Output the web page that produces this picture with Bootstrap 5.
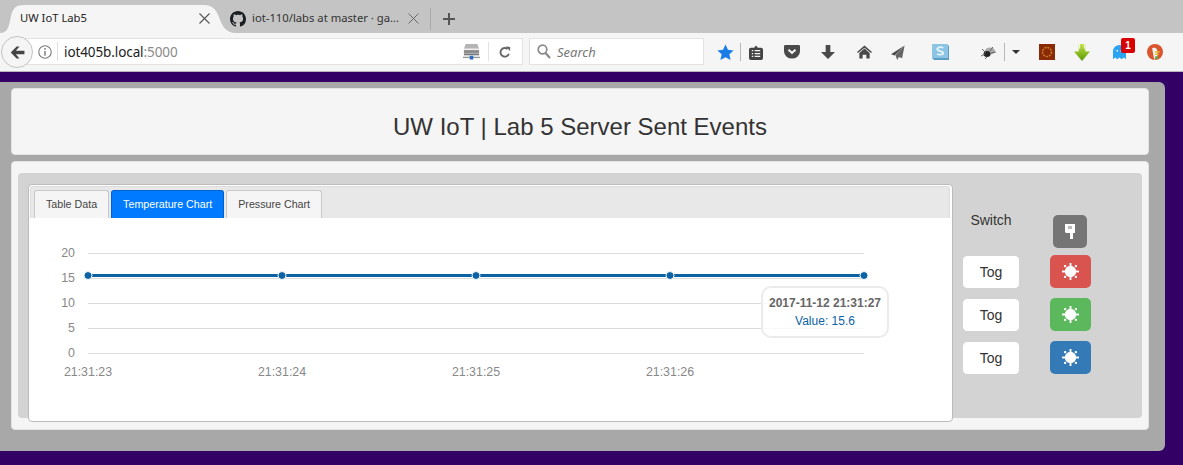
<!DOCTYPE html>
<html lang="en">
<head>
<meta charset="utf-8">
<title>UW IoT Lab5</title>
<link rel="stylesheet" href="https://cdn.jsdelivr.net/npm/bootstrap@5.3.0/dist/css/bootstrap.min.css">
<style>
html,body{margin:0;height:465px;overflow:hidden}
body{background:#330066;font-family:"Liberation Sans",Arial,sans-serif;color:#333;width:1183px}
.strip{height:33px;background:#c4c4c4;font-family:"Noto Sans",sans-serif;font-size:11.25px;color:#222;position:relative}
.shape{position:absolute;left:0;top:0}
.tab1{position:relative;width:222px;height:33px;padding-left:20px}
.tab2{width:208px;height:33px;padding-left:8px;color:#333}
.tabsep{width:1px;height:22px;background:#a9a9a9;margin-top:8px}
.plus{margin-left:12px;align-self:center;margin-top:5px}
.tool{height:39px;background:#f5f5f5;border-bottom:1px solid #b9b4bd;position:relative;font-family:"Noto Sans",sans-serif}
.back{position:absolute;left:1px;top:3px;width:32px;height:32px;border-radius:50%;background:#f5f5f5;border:1px solid #c4c4c4;z-index:2}
.urlbar{margin-left:24px;width:499px;height:27px;background:#fff;border:1px solid #e2e2e2;margin-top:5px}
.urlinfo{width:33px;padding-left:13px;border-right:1px solid #ddd;height:19px}
.urltext{font-size:13.5px;color:#222;padding:2px 0 0 6px;letter-spacing:-.1px}
.urltext span{color:#8a8a8a}
.urlend{margin-left:auto}
.urlsep{width:1px;height:19px;background:#e2e2e2;margin:0 10px 0 8px}
.searchbox{margin-left:6px;width:175px;height:27px;background:#fff;border:1px solid #e2e2e2;margin-top:5px;padding-left:7px;font-size:13px;font-style:italic;color:#777}
.searchbox span{padding-top:2px;margin-left:6px}
.icons{margin-left:6px;display:grid;grid-template-columns:30px 1px 30px 42px 30px 42px 26px 58px 35px 1px 22px 40px 30px 42px 32px;height:38px;place-items:center}
.vsep{width:1px;height:18px;background:#b9b9b9}
.spid{padding-left:5px}
.ghost{position:relative;width:22px;height:22px}
.ghostmark{margin:4px 0 0 6px;display:block}
.cnt{position:absolute;left:14px;top:-3px;width:14px;height:15px;border-radius:2px;background:#d80000;color:#fff;font:bold 10px/15px "Liberation Sans",sans-serif;text-align:center}
.spacer{height:10px}
.panel{width:1165px;height:369px;background:#a8a8a8;border-top-right-radius:6px;border-bottom-right-radius:6px;padding:6px 16px 0 11px}
.wellbox{background:#f5f5f5;border:1px solid #e3e3e3;border-radius:4px}
.headbox{height:67px;margin-bottom:6px}
.headbox h1{font-size:24px;font-weight:400;color:#333;margin:0;line-height:1;padding-top:11px}
.mainbox{height:269px;padding:11px 6px 0}
.graybox{height:245px;background:#d3d3d3;border-radius:4px;padding:11px 0 0 10px}
.chartcard{width:925px;height:238px;background:#fff;border:1px solid #bbb;border-radius:4px;padding:1px 2px 1px 1px;position:relative}
.tabbar{height:32px;background:#e8e8e8;border:1px solid #dcdcdc;border-bottom:0;border-radius:3px 3px 0 0;padding:3px 0 0 3px;gap:2px}
.tabbar .nav-link{font-size:10.7px;line-height:26px;height:28px;padding:0 11px;color:#444;background:#f5f5f5;border:1px solid #c8c8c8;border-bottom:0;border-radius:3px 3px 0 0;margin:0}
.tabbar .nav-link.active{background:#007bff;color:#fff;border-color:#0062cc}
.chartsvg{display:block}
.chartsvg text{font-family:"Liberation Sans",sans-serif;font-size:12.4px;fill:#888}
.hover{position:absolute;left:732px;top:101px;width:128px;height:52px;background:rgba(255,255,255,.8);border:2px solid rgba(230,230,230,.8);border-radius:10px;font-size:12px;text-align:center;padding-top:6px;line-height:18px}
.hover b{display:block;color:#666}
.hover span{color:#0b62a4}
.sidecol{width:180px;padding:26px 0 0 10px}
.rowa{height:38px;margin-bottom:7px}
.rowb{height:33px;margin-bottom:10px}
.swlabel{width:56px;font-size:14px;line-height:20px;text-align:center;color:#333}
.togbtn{width:56px;height:32px;padding:0;font-size:14px;line-height:30px;background:#fff;border:1px solid #fff;border-radius:4px;color:#333}
.ledbtn{width:41px;height:33px;padding:0;border-radius:5px;border:0;margin-left:31px}
.swbtn{width:34px;height:33px;padding:0;border-radius:5px;border:0;background:#757575;margin:5px 0 0 34px}
.ledred{background:#d9534f}.ledgreen{background:#5cb85c}.ledblue{background:#337ab7}
</style>
</head>
<body>
<div class="strip d-flex">
  <svg class="shape" width="240" height="33"><path d="M0 33C8 33 9 26 11 16C13 8 16 5 24 5H204C212 5 216 9 219 17C222 26 226 33 236 33Z" fill="#f5f5f5"/></svg>
  <div class="tab1 d-flex align-items-center pt-1"><span>UW IoT Lab5</span>
    <svg class="ms-auto" style="margin-right:12px" width="11" height="11" viewBox="0 0 11 11"><path d="M.5.5l10 10M10.5.5l-10 10" stroke="#555" stroke-width="1.1"/></svg></div>
  <div class="tab2 d-flex align-items-center pt-1">
    <svg width="16" height="16" viewBox="0 0 16 16"><path fill="#1b1f23" d="M8 0C3.58 0 0 3.58 0 8c0 3.54 2.29 6.53 5.47 7.59.4.07.55-.17.55-.38 0-.19-.01-.82-.01-1.49-2.01.37-2.53-.49-2.69-.94-.09-.23-.48-.94-.82-1.13-.28-.15-.68-.52-.01-.53.63-.01 1.08.58 1.23.82.72 1.21 1.87.87 2.33.66.07-.52.28-.87.51-1.07-1.78-.2-3.64-.89-3.64-3.95 0-.87.31-1.59.82-2.15-.08-.2-.36-1.02.08-2.12 0 0 .67-.21 2.2.82.64-.18 1.32-.27 2-.27.68 0 1.36.09 2 .27 1.53-1.04 2.2-.82 2.2-.82.44 1.1.16 1.92.08 2.12.51.56.82 1.27.82 2.15 0 3.07-1.87 3.75-3.65 3.95.29.25.54.73.54 1.48 0 1.07-.01 1.93-.01 2.2 0 .21.15.46.55.38A8.013 8.013 0 0016 8c0-4.42-3.58-8-8-8z"/></svg>
    <span class="text-nowrap" style="margin-left:6px">iot-110/labs at master · ga...</span>
    <svg class="ms-auto" style="margin-right:11px" width="11" height="11" viewBox="0 0 11 11"><path d="M.5.5l10 10M10.5.5l-10 10" stroke="#666" stroke-width="1"/></svg>
  </div>
  <div class="tabsep"></div>
  <svg class="plus" width="12" height="12" viewBox="0 0 12 12"><path d="M6 0v12M0 6h12" stroke="#555" stroke-width="2"/></svg>
</div>
<div class="tool d-flex">
  <div class="back d-flex align-items-center justify-content-center">
    <svg width="15" height="13" viewBox="0 0 17 15"><path d="M7.500.5L.7 7.500l6.800 7h3.300L6.600 9.400H16.500V5.600H6.600L10.800.5z" fill="#444"/></svg>
  </div>
  <div class="urlbar d-flex align-items-center">
    <div class="urlinfo d-flex align-items-center">
      <svg width="14" height="14" viewBox="0 0 13 13"><circle cx="6.500" cy="6.500" r="5.800" fill="none" stroke="#777"/><path d="M6.500 5.500v4.500M6.500 2.800v1.500" stroke="#777" stroke-width="1.300"/></svg>
    </div>
    <div class="urltext">iot405b.local<span>:5000</span></div>
    <div class="urlend d-flex align-items-center">
      <svg width="17" height="16" viewBox="0 0 19 17" preserveAspectRatio="none"><path d="M3 0h13l2 5H1z" fill="#b4b4b4"/><rect x="1" y="5" width="17" height="1.500" fill="#eee"/><rect x="1" y="6.500" width="17" height="3" fill="#8a8a8a"/><rect x="1" y="10" width="17" height="2" fill="#777"/><rect y="13.500" width="19" height="1.500" fill="#999"/><rect x="7.500" y="12.500" width="4" height="4" fill="#2d6cc0"/></svg>
      <div class="urlsep"></div>
      <svg style="margin-right:11px" width="12" height="12" viewBox="0 0 13 14"><path d="M11 9a5 5 0 1 1-1.500-5.500" fill="none" stroke="#666" stroke-width="2.200"/><path d="M7.500 .5l5 .5v5z" fill="#666"/></svg>
    </div>
  </div>
  <div class="searchbox d-flex align-items-center">
    <svg width="14" height="15" viewBox="0 0 14 15"><circle cx="5.500" cy="5.500" r="4.300" fill="none" stroke="#8a8a8a" stroke-width="1.700"/><path d="M8.500 9l4.500 5" stroke="#8a8a8a" stroke-width="2.200"/></svg>
    <span>Search</span>
  </div>
  <div class="icons">
    <svg width="17" height="17" viewBox="0 0 18 18"><path d="M9 .5l2.600 5.600 6 .7-4.500 4.100 1.300 6.100L9 14l-5.400 3 1.300-6.100L.4 6.800l6-.7z" fill="#1a7de6"/></svg>
    <div class="vsep"></div>
    <svg width="14" height="15" viewBox="0 0 15 17" preserveAspectRatio="none"><path d="M2 3h3.500L7.500.5 9.500 3H13a2 2 0 0 1 2 2v10a2 2 0 0 1-2 2H2a2 2 0 0 1-2-2V5a2 2 0 0 1 2-2z" fill="#444"/><path d="M3 6.500h1.500M6 6.500h6M3 9.800h1.500M6 9.800h6M3 13h1.500M6 13h6" stroke="#f5f5f5" stroke-width="1.400"/></svg>
    <svg width="16" height="14" viewBox="0 0 17 16" preserveAspectRatio="none"><path d="M1.500 0h14A1.500 1.500 0 0 1 17 1.500V7a8.500 8.500 0 0 1-17 0V1.500A1.500 1.500 0 0 1 1.500 0z" fill="#4a4a4a"/><path d="M4.800 5.500L8.500 9l3.700-3.500" fill="none" stroke="#f5f5f5" stroke-width="2.300"/></svg>
    <svg width="14" height="14" viewBox="0 0 15 16" preserveAspectRatio="none"><path d="M5 0h5v8h5l-7.500 8L0 8h5z" fill="#4a4a4a"/></svg>
    <svg width="15" height="14" viewBox="0 0 16 16" preserveAspectRatio="none"><path d="M8 .5L16 8l-1 1L8 3 1 9 0 8z" fill="#4a4a4a"/><path d="M8 4l5.500 5v6.500H10V11H6v4.500H2.500V9z" fill="#4a4a4a"/></svg>
    <svg width="14" height="15" viewBox="0 0 17 17" preserveAspectRatio="none"><path d="M16.500.5L0 10.500l4.500 1.500z" fill="#4a4a4a"/><path d="M16.500.5L5.500 11.500l2 5.500 2-3.500 4 1.500z" fill="#666"/></svg>
    <svg width="17" height="16" viewBox="0 0 16 17" preserveAspectRatio="none"><rect x="0" y="0" width="15" height="15" rx="1" fill="#8cc4e4"/><path d="M15 1l1 1v15H2l-2-2h15z" fill="#5c9dc4"/><path d="M10.500 4.200C9 3 5 3.100 5 5.500 5 8 10.500 7 10.500 9.500c0 2.200-4 2.200-5.700 1" fill="none" stroke="#e4f2fa" stroke-width="1.900"/></svg>
    <div class="spid d-flex align-items-center justify-content-center">
      <svg width="16" height="14" viewBox="0 0 16 14"><ellipse cx="9" cy="6" rx="5" ry="3.500" fill="#aaa"/><ellipse cx="6" cy="9" rx="3.500" ry="3" fill="#222"/><path d="M1 4l4 4M0 11l4-2M6 12l-2 2M12 2l-3 4M15 7l-5 1" stroke="#666"/></svg>
    </div>
    <div class="vsep"></div>
    <svg width="8" height="4" viewBox="0 0 10 5"><path d="M0 0h10L5 5z" fill="#333"/></svg>
    <svg width="16" height="16" viewBox="0 0 16 16"><rect width="16" height="16" fill="#8a2a06"/><circle cx="8" cy="8" r="4.500" fill="none" stroke="#c9832a" stroke-width="1.400" stroke-dasharray="2 1"/></svg>
    <svg width="16" height="17" viewBox="0 0 17 18" preserveAspectRatio="none"><defs><linearGradient id="gr" x1="0" y1="0" x2="0" y2="1"><stop offset="0" stop-color="#c0e040"/><stop offset="1" stop-color="#5a9a08"/></linearGradient></defs><path d="M5 0h7v8h5l-8.500 10L0 8h5z" fill="url(#gr)"/><path d="M6 0v5M11 0v5" stroke="#fff"/></svg>
    <div class="ghost">
      <svg class="ghostmark" width="13" height="15" viewBox="0 0 14 18" preserveAspectRatio="none"><path d="M0 17V7a7 7 0 0 1 14 0v10l-2.300-2-2.400 2L7 15l-2.300 2-2.400-2z" fill="#2aa4f0"/><circle cx="4.500" cy="7" r="1" fill="#fff"/><circle cx="9" cy="7" r="1" fill="#fff"/></svg>
      <div class="cnt">1</div>
    </div>
    <svg width="16" height="16" viewBox="0 0 17 17"><circle cx="8.500" cy="8.500" r="8.500" fill="#d9552e"/><path d="M5.500 4.500c3-1.500 5.500.5 5.500 3v8l-3 1.200C7 14 6 8 5.500 4.500z" fill="#f2f2f2"/><path d="M8.500 8.500h5M8.500 11h4" stroke="#e9b822" stroke-width="1.500"/><path d="M8.500 13.500l3-1v3l-3 1z" fill="#5aa83a"/></svg>
  </div>
</div>
<div class="spacer"></div>
<div class="panel">
  <div class="wellbox headbox d-flex align-items-center justify-content-center"><h1>UW IoT | Lab 5 Server Sent Events</h1></div>
  <div class="wellbox mainbox">
    <div class="graybox d-flex">
      <div class="chartcard">
        <ul class="nav tabbar">
          <li class="nav-item"><a class="nav-link" href="#">Table Data</a></li>
          <li class="nav-item"><a class="nav-link active" href="#">Temperature Chart</a></li>
          <li class="nav-item"><a class="nav-link" href="#">Pressure Chart</a></li>
        </ul>
        <svg class="chartsvg" width="920" height="202" viewBox="1 0 920 202">
          <g stroke="#ddd" stroke-width="1"><path d="M59 35.500H835M59 60.500H835M59 85.500H835M59 110.500H835M59 135.500H835"/></g>
          <g text-anchor="end"><text x="46" y="39">20</text><text x="46" y="64">15</text><text x="46" y="89">10</text><text x="46" y="114">5</text><text x="46" y="139">0</text></g>
          <g text-anchor="middle"><text x="59" y="158">21:31:23</text><text x="253" y="158">21:31:24</text><text x="447" y="158">21:31:25</text><text x="641" y="158">21:31:26</text></g>
          <path d="M59 57.500H835" stroke="#0b62a4" stroke-width="3"/>
          <g fill="#0b62a4" stroke="#fff" stroke-width="1"><circle cx="59" cy="57.500" r="4"/><circle cx="253" cy="57.500" r="4"/><circle cx="447" cy="57.500" r="4"/><circle cx="641" cy="57.500" r="4"/><circle cx="835" cy="57.500" r="4"/></g>
        </svg>
        <div class="hover"><b>2017-11-12 21:31:27</b><span>Value: 15.6</span></div>
      </div>
      <div class="sidecol">
        <div class="rowa d-flex align-items-start">
          <div class="swlabel">Switch</div>
          <button class="btn swbtn d-flex align-items-center justify-content-center" type="button" aria-label="switch">
            <svg width="10" height="15" viewBox="0 0 10 15"><path d="M0 0h10v9H8v6H5V9H1L0 8z" fill="#fff"/><rect x="3" y="2" width="4" height="3" fill="#bbb"/></svg>
          </button>
        </div>
        <div class="rowb d-flex align-items-end">
          <button class="btn togbtn" type="button">Tog</button>
          <button class="btn ledbtn ledred d-flex align-items-center justify-content-center" type="button" aria-label="red led"><svg width="17" height="17" viewBox="0 0 18 18"><circle cx="9" cy="9" r="6" fill="#fff"/><g fill="#fff"><rect x="8" width="2" height="4"/><rect x="8" y="14" width="2" height="4"/><rect y="8" width="4" height="2"/><rect x="14" y="8" width="4" height="2"/><rect x="2.200" y="2.200" width="2.200" height="2.200"/><rect x="13.600" y="2.200" width="2.200" height="2.200"/><rect x="2.200" y="13.600" width="2.200" height="2.200"/><rect x="13.600" y="13.600" width="2.200" height="2.200"/></g></svg></button>
        </div>
        <div class="rowb d-flex align-items-end">
          <button class="btn togbtn" type="button">Tog</button>
          <button class="btn ledbtn ledgreen d-flex align-items-center justify-content-center" type="button" aria-label="green led"><svg width="17" height="17" viewBox="0 0 18 18"><circle cx="9" cy="9" r="6" fill="#fff"/><g fill="#fff"><rect x="8" width="2" height="4"/><rect x="8" y="14" width="2" height="4"/><rect y="8" width="4" height="2"/><rect x="14" y="8" width="4" height="2"/><rect x="2.200" y="2.200" width="2.200" height="2.200"/><rect x="13.600" y="2.200" width="2.200" height="2.200"/><rect x="2.200" y="13.600" width="2.200" height="2.200"/><rect x="13.600" y="13.600" width="2.200" height="2.200"/></g></svg></button>
        </div>
        <div class="rowb d-flex align-items-end">
          <button class="btn togbtn" type="button">Tog</button>
          <button class="btn ledbtn ledblue d-flex align-items-center justify-content-center" type="button" aria-label="blue led"><svg width="17" height="17" viewBox="0 0 18 18"><circle cx="9" cy="9" r="6" fill="#fff"/><g fill="#fff"><rect x="8" width="2" height="4"/><rect x="8" y="14" width="2" height="4"/><rect y="8" width="4" height="2"/><rect x="14" y="8" width="4" height="2"/><rect x="2.200" y="2.200" width="2.200" height="2.200"/><rect x="13.600" y="2.200" width="2.200" height="2.200"/><rect x="2.200" y="13.600" width="2.200" height="2.200"/><rect x="13.600" y="13.600" width="2.200" height="2.200"/></g></svg></button>
        </div>
      </div>
    </div>
  </div>
</div>
<script src="https://cdn.jsdelivr.net/npm/bootstrap@5.3.0/dist/js/bootstrap.bundle.min.js"></script>
</body>
</html>
